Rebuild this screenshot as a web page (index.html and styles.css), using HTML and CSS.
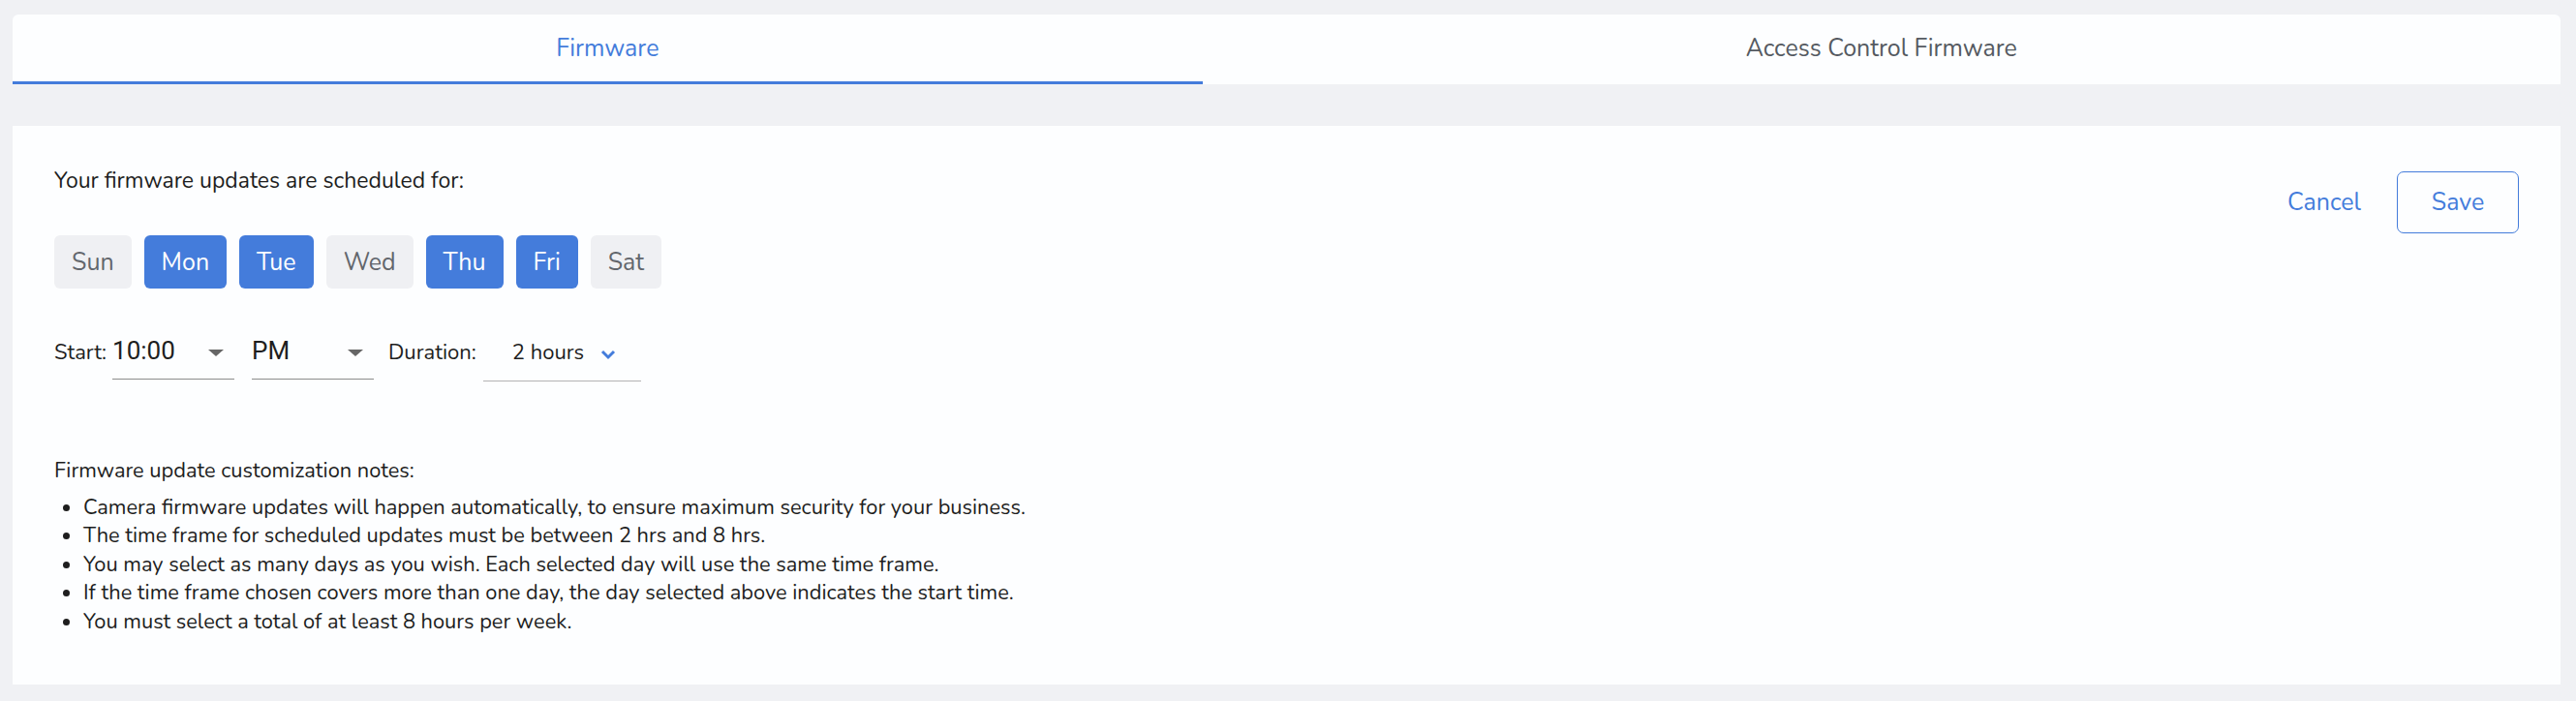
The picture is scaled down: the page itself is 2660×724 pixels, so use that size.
FILE: index.html
```html
<!DOCTYPE html>
<html>
<head>
<meta charset="utf-8">
<link rel="stylesheet" href="styles.css">
</head>
<body>
  <div class="tabs">
    <div class="tab active">Firmware</div>
    <div class="tab">Access Control Firmware</div>
  </div>
  <div class="card">
    <div class="top">
      <div class="schedule">
        <p class="title">Your firmware updates are scheduled for:</p>
        <div class="days">
          <span class="day">Sun</span>
          <span class="day on">Mon</span>
          <span class="day on">Tue</span>
          <span class="day">Wed</span>
          <span class="day on">Thu</span>
          <span class="day on">Fri</span>
          <span class="day">Sat</span>
        </div>
        <div class="row">
          <span class="label">Start:</span>
          <div class="select time">10:00<span class="caret"></span></div>
          <div class="select ampm">PM<span class="caret"></span></div>
          <span class="label dur-label">Duration:</span>
          <div class="select dur">2 hours
            <svg class="chev" viewBox="0 0 16 12" width="16" height="12"><path d="M2 3 L8 9 L14 3" fill="none" stroke="#447cdb" stroke-width="3"/></svg>
          </div>
        </div>
      </div>
      <div class="actions">
        <span class="cancel">Cancel</span>
        <span class="save">Save</span>
      </div>
    </div>
    <div class="notes">
      <p class="notes-title">Firmware update customization notes:</p>
      <ul>
        <li>Camera firmware updates will happen automatically, to ensure maximum security for your business.</li>
        <li>The time frame for scheduled updates must be between 2 hrs and 8 hrs.</li>
        <li>You may select as many days as you wish. Each selected day will use the same time frame.</li>
        <li>If the time frame chosen covers more than one day, the day selected above indicates the start time.</li>
        <li>You must select a total of at least 8 hours per week.</li>
      </ul>
    </div>
  </div>
</body>
</html>
```

FILE: styles.css
```css
html, body {
  margin: 0;
  background: #f0f1f4;
}
body {
  padding: 15px 16px 0 13px;
  font-family: "Nunito", Lato, "Noto Sans", sans-serif;
  color: #1e1e1e;
}
.tabs {
  display: flex;
  background: #fdfeff;
  border-radius: 6px 6px 0 0;
  height: 72px;
}
.tab {
  flex: 1 1 auto;
  display: flex;
  align-items: center;
  justify-content: center;
  font-size: 25px;
  color: #555a61;
  height: 69px;
  border-bottom: 3px solid transparent;
}
.tab.active {
  color: #447cdb;
  border-bottom-color: #447cdb;
}
.card {
  margin-top: 43px;
  background: #fdfeff;
  padding: 40px 43px 50px;
}
.top {
  display: flex;
  justify-content: space-between;
  align-items: flex-start;
}
.title {
  margin: 0;
  font-size: 23px;
  line-height: 33px;
}
.days {
  display: flex;
  gap: 13px;
  margin-top: 40px;
}
.day {
  height: 55px;
  padding: 0 18px;
  border-radius: 6px;
  background: #eff0f3;
  color: #62666c;
  font-size: 25px;
  display: flex;
  align-items: center;
}
.day.on {
  background: #447cdb;
  color: #ffffff;
}
.row {
  display: flex;
  align-items: baseline;
  margin-top: 49px;
}
.label {
  font-size: 22px;
  margin-right: 6px;
}
.select {
  position: relative;
  font-family: Roboto, "Liberation Sans", sans-serif;
  font-size: 26px;
  line-height: 30px;
  padding-bottom: 14px;
  border-bottom: 1px solid #8c8c8c;
  width: 126px;
  box-sizing: border-box;
}
.ampm {
  margin-left: 18px;
  margin-right: 15px;
}
.caret {
  position: absolute;
  right: 11px;
  top: 14px;
  width: 0;
  height: 0;
  border-left: 8px solid transparent;
  border-right: 8px solid transparent;
  border-top: 7px solid #666;
}
.dur-label {
  margin-right: 7px;
}
.select.dur {
  font-family: "Nunito", Lato, "Noto Sans", sans-serif;
  font-size: 22px;
  width: 163px;
  padding-left: 30px;
  border-bottom-color: #b3b3b3;
}
.chev {
  position: absolute;
  left: 121px;
  top: 11px;
}
.actions {
  display: flex;
  align-items: center;
  margin-top: 7px;
}
.cancel {
  color: #447cdb;
  font-size: 25px;
  margin-right: 37px;
}
.save {
  color: #447cdb;
  font-size: 25px;
  width: 126px;
  height: 64px;
  box-sizing: border-box;
  border: 1px solid #447cdb;
  border-radius: 7px;
  display: flex;
  align-items: center;
  justify-content: center;
}
.notes {
  margin-top: 78px;
  font-size: 21.8px;
  line-height: 29.5px;
}
.notes-title {
  margin: 0;
  font-size: 21.8px;
}
.notes ul {
  margin: 8px 0 0;
  padding-left: 30px;
}
```
